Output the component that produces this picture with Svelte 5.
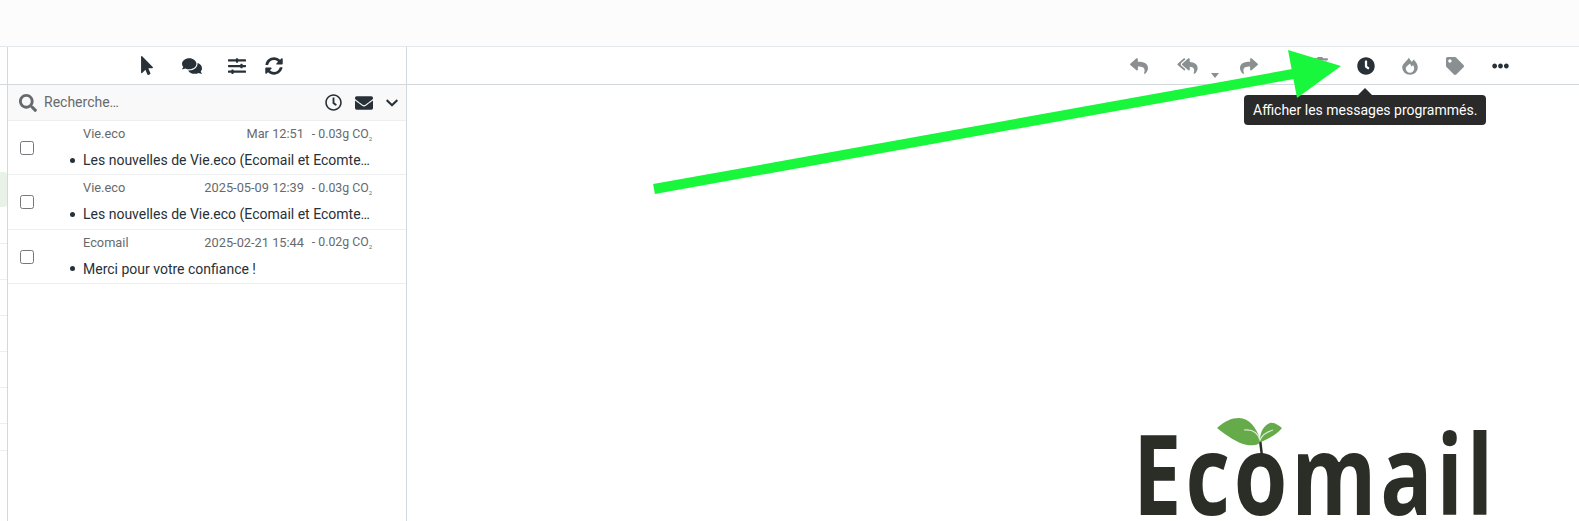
<script>
  const icons = {
    pointer: ['0 0 320 512', 'M302.189 329.126H196.105l55.831 135.993c3.889 9.428-.555 19.999-9.444 23.999l-49.165 21.427c-9.165 4-19.443-.571-23.332-9.714l-53.053-129.136-86.664 89.138C18.729 472.71 0 463.554 0 447.977V18.299C0 1.899 19.921-6.096 30.277 5.443l284.412 292.542c11.472 11.179 3.007 31.141-12.5 31.141z'],
    comments: ['0 0 576 512', 'M416 192c0-88.4-93.1-160-208-160S0 103.6 0 192c0 34.3 14.1 65.9 38 92-13.4 30.2-35.5 54.2-35.8 54.5-2.2 2.3-2.8 5.7-1.5 8.7S4.8 352 8 352c36.6 0 66.9-12.3 88.7-25 32.2 15.7 70.3 25 111.3 25 114.9 0 208-71.6 208-160zm122 220c23.9-26 38-57.7 38-92 0-66.9-53.5-124.2-129.3-148.1.9 6.6 1.3 13.3 1.3 20.1 0 105.9-107.7 192-240 192-10.8 0-21.3-.8-31.7-1.9C207.8 439.6 281.8 480 368 480c41 0 79.1-9.2 111.3-25 21.8 12.7 52.1 25 88.7 25 3.2 0 6.1-1.9 7.3-4.8 1.3-2.9.7-6.3-1.5-8.7-.3-.3-22.4-24.2-35.8-54.5z'],
    sliders: ['0 0 512 512', 'M496 384H160v-16c0-8.8-7.2-16-16-16h-32c-8.8 0-16 7.2-16 16v16H16c-8.8 0-16 7.2-16 16v32c0 8.8 7.2 16 16 16h80v16c0 8.8 7.2 16 16 16h32c8.8 0 16-7.2 16-16v-16h336c8.8 0 16-7.2 16-16v-32c0-8.8-7.2-16-16-16zm0-160h-80v-16c0-8.8-7.2-16-16-16h-32c-8.8 0-16 7.2-16 16v16H16c-8.8 0-16 7.2-16 16v32c0 8.8 7.2 16 16 16h336v16c0 8.8 7.2 16 16 16h32c8.8 0 16-7.2 16-16v-16h80c8.8 0 16-7.2 16-16v-32c0-8.8-7.2-16-16-16zm0-160H288V48c0-8.8-7.2-16-16-16h-32c-8.8 0-16 7.2-16 16v16H16C7.2 64 0 71.2 0 80v32c0 8.8 7.2 16 16 16h208v16c0 8.8 7.2 16 16 16h32c8.8 0 16-7.2 16-16v-16h208c8.8 0 16-7.2 16-16V80c0-8.8-7.2-16-16-16z'],
    sync: ['0 0 512 512', 'M370.72 133.28C339.458 104.008 298.888 87.962 255.848 88c-77.458.068-144.328 53.178-162.791 126.85-1.344 5.363-6.122 9.15-11.651 9.15H24.103c-7.498 0-13.194-6.807-11.807-14.176C33.933 94.924 134.813 8 256 8c66.448 0 126.791 26.136 171.315 68.685L463.03 40.97C478.149 25.851 504 36.559 504 57.941V192c0 13.255-10.745 24-24 24H345.941c-21.382 0-32.09-25.851-16.971-40.971l41.75-41.749zM32 296h134.059c21.382 0 32.09 25.851 16.971 40.971l-41.75 41.75c31.262 29.273 71.835 45.319 114.876 45.28 77.418-.07 144.315-53.144 162.787-126.849 1.344-5.363 6.122-9.15 11.651-9.15h57.304c7.498 0 13.194 6.807 11.807 14.176C478.067 417.076 377.187 504 256 504c-66.448 0-126.791-26.136-171.315-68.685L48.97 471.03C33.851 486.149 8 475.441 8 454.059V320c0-13.255 10.745-24 24-24z'],
    search: ['0 0 512 512', 'M505 442.7L405.3 343c-4.5-4.5-10.6-7-17-7H372c27.6-35.3 44-79.7 44-128C416 93.1 322.9 0 208 0S0 93.1 0 208s93.1 208 208 208c48.3 0 92.7-16.4 128-44v16.3c0 6.4 2.5 12.5 7 17l99.7 99.7c9.4 9.4 24.6 9.4 33.9 0l28.3-28.3c9.4-9.4 9.4-24.6.1-34zM208 336c-70.7 0-128-57.2-128-128 0-70.7 57.2-128 128-128 70.7 0 128 57.2 128 128 0 70.7-57.2 128-128 128z'],
    clockLine: ['0 0 512 512', 'M256 8C119 8 8 119 8 256s111 248 248 248 248-111 248-248S393 8 256 8zm0 448c-110.5 0-200-89.5-200-200S145.5 56 256 56s200 89.5 200 200-89.5 200-200 200zm61.8-104.4l-84.9-61.7c-3.1-2.3-4.9-5.9-4.9-9.7V116c0-6.6 5.4-12 12-12h32c6.6 0 12 5.4 12 12v141.7l66.8 48.6c5.4 3.9 6.5 11.4 2.6 16.8L334.6 349c-3.9 5.3-11.4 6.5-16.8 2.6z'],
    envelope: ['0 0 512 512', 'M502.3 190.8c3.9-3.1 9.7-.2 9.7 4.7V400c0 26.5-21.5 48-48 48H48c-26.5 0-48-21.5-48-48V195.6c0-5 5.7-7.8 9.7-4.7 22.4 17.4 52.1 39.5 154.1 113.6 21.1 15.4 56.7 47.8 92.2 47.6 35.7.3 72-32.8 92.3-47.6 102-74.1 131.6-96.3 154-113.7zM256 320c23.2.4 56.6-29.2 73.4-41.4 132.7-96.3 142.8-104.7 173.4-128.7 5.8-4.5 9.2-11.5 9.2-18.9v-19c0-26.5-21.5-48-48-48H48C21.5 64 0 85.5 0 112v19c0 7.4 3.4 14.3 9.2 18.9 30.6 23.9 40.7 32.4 173.4 128.7 16.8 12.2 50.2 41.8 73.4 41.4z'],
    chevron: ['0 0 448 512', 'M207.029 381.476L12.686 187.132c-9.373-9.373-9.373-24.569 0-33.941l22.667-22.667c9.357-9.357 24.522-9.375 33.901-.04L224 284.505l154.745-154.021c9.379-9.335 24.544-9.317 33.901.04l22.667 22.667c9.373 9.373 9.373 24.569 0 33.941L240.971 381.476c-9.373 9.372-24.569 9.372-33.942 0z'],
    reply: ['0 0 512 512', 'M8.309 189.836L184.313 37.851C199.719 24.546 224 35.347 224 56.015v80.053c160.629 1.839 288 34.032 288 186.258 0 61.441-39.581 122.309-83.333 154.132-13.653 9.931-33.111-2.533-28.077-18.631 45.344-145.012-21.507-183.51-176.59-185.742V360c0 20.7-24.3 31.453-39.687 18.164l-176.004-152c-11.071-9.562-11.086-26.753 0-36.328z'],
    replyAll: ['0 0 576 512', 'M136.309 189.836L312.313 37.851C327.72 24.546 352 35.348 352 56.015v82.763c129.182 10.231 224 52.212 224 183.548 0 61.441-39.582 122.309-83.333 154.132-13.653 9.931-33.111-2.533-28.077-18.631 38.512-123.162-3.922-169.482-112.59-182.015v84.175c0 20.701-24.3 31.453-39.687 18.164L136.309 226.164c-11.071-9.561-11.086-26.753 0-36.328zm-128 36.328L184.313 378.15C199.7 391.439 224 380.687 224 359.986v-15.818l-108.606-93.785A55.96 55.96 0 0 1 96 207.998a55.953 55.953 0 0 1 19.393-42.38L224 71.832V56.015c0-20.667-24.28-31.469-39.687-18.164L8.309 189.836c-11.086 9.575-11.071 26.767 0 36.328z'],
    share: ['0 0 512 512', 'M503.691 189.836L327.687 37.851C312.281 24.546 288 35.347 288 56.015v80.053C127.371 137.907 0 170.1 0 322.326c0 61.441 39.581 122.309 83.333 154.132 13.653 9.931 33.111-2.533 28.077-18.631C66.066 312.814 132.917 274.316 288 272.085V360c0 20.7 24.3 31.453 39.687 18.164l176.004-152c11.071-9.562 11.086-26.753 0-36.328z'],
    trash: ['0 0 448 512', 'M432 32H312l-9.4-18.7A24 24 0 0 0 281.1 0H166.8a23.72 23.72 0 0 0-21.4 13.3L136 32H16A16 16 0 0 0 0 48v32a16 16 0 0 0 16 16h416a16 16 0 0 0 16-16V48a16 16 0 0 0-16-16zM53.2 467a48 48 0 0 0 47.9 45h245.8a48 48 0 0 0 47.9-45L416 128H32z'],
    clock: ['0 0 512 512', 'M256,8C119,8,8,119,8,256S119,504,256,504,504,393,504,256,393,8,256,8Zm92.49,313h0l-20,25a16,16,0,0,1-22.49,2.5h0l-67-49.72a40,40,0,0,1-15-31.23V112a16,16,0,0,1,16-16h32a16,16,0,0,1,16,16V256l58,42.5A16,16,0,0,1,348.49,321Z'],
    fire: ['0 0 16 18', 'M7 .5C7.5 2.500 9 3.800 10 5c.5-.8 1-1.500 1.500-2.500 2.500 2 4.300 5 4.300 8A7.800 7.300 0 0 1 .2 10.500C.2 7 4.500 4.500 7 .5zM8 6.500C7 8 3.800 9 3.800 11.500a4.200 4.200 0 0 0 8.400 0c0-1.500-.7-3-1.200-3.500-.5.7-1 1.200-1.500 1.500C9 8.500 8.300 7.500 8 6.500z'],
    tag: ['0 0 512 512', 'M0 252.118V48C0 21.49 21.49 0 48 0h204.118a48 48 0 0 1 33.941 14.059l211.882 211.882c18.745 18.745 18.745 49.137 0 67.882L293.823 497.941c-18.745 18.745-49.137 18.745-67.882 0L14.059 286.059A48 48 0 0 1 0 252.118zM112 64c-26.51 0-48 21.49-48 48s21.49 48 48 48 48-21.49 48-48-21.49-48-48-48z'],
    ellipsis: ['0 0 512 512', 'M328 256c0 39.8-32.2 72-72 72s-72-32.2-72-72 32.2-72 72-72 72 32.2 72 72zm104-72c-39.800 0-72 32.200-72 72s32.200 72 72 72 72-32.200 72-72-32.200-72-72-72zm-352 0c-39.800 0-72 32.200-72 72s32.200 72 72 72 72-32.200 72-72-32.200-72-72-72z']
  };

  const listTools = [
    { icon: 'pointer', w: 12, h: 19, gap: 29 },
    { icon: 'comments', w: 20, h: 18, gap: 26 },
    { icon: 'sliders', w: 18, h: 18, gap: 19 },
    { icon: 'sync', w: 18, h: 18, gap: 0 }
  ];

  const readTools = [
    { icon: 'reply', w: 18, gap: 29, color: '#8a8f92' },
    { icon: 'replyAll', w: 21, gap: 42, color: '#8a8f92', caret: true },
    { icon: 'share', w: 18, gap: 54, color: '#8a8f92' },
    { icon: 'trash', w: 16, gap: 29, color: '#8a8f92' },
    { icon: 'clock', w: 18, gap: 27, color: '#283138' },
    { icon: 'fire', w: 16, gap: 28, color: '#8a8f92' },
    { icon: 'tag', w: 18, gap: 28, color: '#8a8f92' },
    { icon: 'ellipsis', w: 17, gap: 0, color: '#283138' }
  ];

  const messages = [
    { from: 'Vie.eco', date: 'Mar 12:51', co2: '- 0.03g', subject: 'Les nouvelles de Vie.eco (Ecomail et Ecomte…' },
    { from: 'Vie.eco', date: '2025-05-09 12:39', co2: '- 0.03g', subject: 'Les nouvelles de Vie.eco (Ecomail et Ecomte…' },
    { from: 'Ecomail', date: '2025-02-21 15:44', co2: '- 0.02g', subject: 'Merci pour votre confiance !' }
  ];

  const folderHeights = [36, 36, 36, 36, 36, 27, 45];
</script>

{#snippet icon(name, w, h, color)}
  <svg class="icon" viewBox={icons[name][0]} width={w} height={h} fill={color}>
    <path fill-rule="evenodd" d={icons[name][1]} />
  </svg>
{/snippet}

<div class="page">
  <div class="topbar"></div>

  <div class="main">
    <aside class="folders">
      <div class="folders-head"></div>
      <div class="active-folder"></div>
      {#each folderHeights as h}
        <div class="folder" style="height: {h}px"></div>
      {/each}
    </aside>

    <section class="list">
      <div class="list-tools">
        {#each listTools as t}
          <span class="tool" style="margin-right: {t.gap}px">
            {@render icon(t.icon, t.w, t.h, '#283138')}
          </span>
        {/each}
      </div>

      <div class="search">
        {@render icon('search', 18, 18, '#666a6d')}
        <span class="placeholder">Recherche…</span>
        <span class="search-actions">
          {@render icon('clockLine', 17, 17, '#283138')}
          {@render icon('envelope', 18, 18, '#283138')}
          {@render icon('chevron', 12, 14, '#283138')}
        </span>
      </div>

      {#each messages as m}
        <div class="row">
          <span class="check"><input type="checkbox" /></span>
          <div class="body">
            <div class="meta">
              <span class="from">{m.from}</span>
              <span class="date">{m.date}</span>
              <span class="co2">{m.co2} CO<sub>2</sub></span>
            </div>
            <div class="subject-line">
              <span class="dot"></span>
              <span class="subject">{m.subject}</span>
            </div>
          </div>
        </div>
      {/each}
    </section>

    <section class="reader">
      <div class="read-tools">
        {#each readTools as t}
          <span class="tool" style="margin-right: {t.gap}px">
            {@render icon(t.icon, t.w, 18, t.color)}
            {#if t.caret}<span class="caret"></span>{/if}
          </span>
        {/each}
      </div>

      <div class="logo">
        <span class="wordmark">Ecomail</span>
        <svg class="sprout" viewBox="0 0 66 38" width="66" height="38">
          <path d="M43 22 C44 28 44 32 45 37" stroke="#2a2e27" stroke-width="2.5" fill="none" />
          <path d="M0 10 C8 3 14 0 22 0 C32 0 40 10 43 22 C44 27 36 28 30 27 C20 25 10 18 0 10 Z" fill="#66ab4a" />
          <path d="M43 22 C43 14 47 7 53 5 C58 4 62 8 65 10 C60 16 52 21 43 24 Z" fill="#66ab4a" />
          <path d="M27 12 C36 11 41 15 43 22 C45 17 49 14 56 12" stroke="#dcebd3" stroke-width="1.2" fill="none" />
        </svg>
      </div>

      <div class="tooltip">Afficher les messages programmés.</div>
    </section>
  </div>

  <svg class="arrow" viewBox="0 0 1579 521" width="1579" height="521">
    <path d="M654 189 L1296 73.500" stroke="#19f73c" stroke-width="10" fill="none" />
    <path d="M1288 50 L1341 66 L1297 98 Z" fill="#19f73c" />
  </svg>
</div>

<style>
  :global(body) {
    margin: 0;
    background: #fff;
  }

  .page {
    position: relative;
    width: 1579px;
    height: 521px;
    overflow: hidden;
    font-family: Roboto, "Liberation Sans", sans-serif;
    color: #283138;
  }

  .topbar {
    height: 46px;
    background: #fcfcfd;
    border-bottom: 1px solid #e6e9eb;
  }

  .main {
    display: flex;
    height: 474px;
  }

  .folders {
    width: 7px;
    border-right: 1px solid #d3d8dc;
    flex-shrink: 0;
  }

  .folders-head {
    height: 37px;
    border-bottom: 1px solid #d3d8dc;
  }

  .active-folder {
    margin-top: 87px;
    height: 35px;
    background: #e9f2e6;
    border-radius: 0 3px 3px 0;
    margin-bottom: 36px;
  }

  .folder {
    box-sizing: border-box;
    border-top: 1px solid #eceeef;
  }

  .list {
    width: 398px;
    border-right: 1px solid #d3d8dc;
    flex-shrink: 0;
  }

  .list-tools {
    height: 37px;
    display: flex;
    align-items: center;
    padding-left: 133px;
    border-bottom: 1px solid #d3d8dc;
  }

  .tool {
    position: relative;
    display: flex;
  }

  .icon {
    display: block;
    flex-shrink: 0;
  }

  .search {
    height: 35px;
    display: flex;
    align-items: center;
    padding: 0 8px 0 11px;
    background: #f9f9f9;
    border-bottom: 1px solid #eceeef;
    color: #666a6d;
    font-size: 14px;
  }

  .placeholder {
    margin: 0 0 2px 7px;
  }

  .search-actions {
    margin-left: auto;
    display: flex;
    align-items: center;
    gap: 13px;
  }

  .row {
    box-sizing: border-box;
    height: 54.33px;
    display: flex;
    border-bottom: 1px solid #eceeef;
  }

  .check {
    width: 62px;
    flex-shrink: 0;
    padding-left: 12px;
    box-sizing: border-box;
  }

  .check input {
    appearance: none;
    display: block;
    box-sizing: border-box;
    width: 14px;
    height: 14px;
    margin: 20px 0 0;
    background: #fff;
    border: 1px solid #77767b;
    border-radius: 2.5px;
  }

  .body {
    width: 301px;
  }

  .meta {
    height: 25px;
    display: flex;
    align-items: center;
    margin: 0 -1px 0 13px;
    font-size: 12.8px;
    color: #666a6d;
  }

  .date {
    margin: 0 2px 0 auto;
  }

  .co2 {
    width: 66px;
    text-align: right;
    white-space: nowrap;
    font-size: 12.3px;
  }

  .co2 sub {
    font-size: 6px;
    line-height: 0;
  }

  .subject-line {
    display: flex;
    align-items: center;
    height: 26px;
    margin-top: 1px;
  }

  .dot {
    width: 5px;
    height: 5px;
    border-radius: 50%;
    background: #283138;
    margin-right: 8px;
    flex-shrink: 0;
  }

  .subject {
    font-size: 14px;
    white-space: nowrap;
  }

  .reader {
    position: relative;
    flex: 1;
  }

  .read-tools {
    height: 37px;
    display: flex;
    align-items: center;
    justify-content: flex-end;
    padding-right: 70px;
    border-bottom: 1px solid #d3d8dc;
  }

  .caret {
    position: absolute;
    left: 34px;
    top: 16px;
    width: 0;
    height: 0;
    border: 4px solid transparent;
    border-top: 5px solid #8a8f92;
    border-bottom: 0;
  }

  .logo {
    position: relative;
    width: 440px;
    margin: 337px 0 0 726px;
  }

  .wordmark {
    display: block;
    width: fit-content;
    font-family: "Open Sans", sans-serif;
    font-weight: 700;
    font-size: 111px;
    line-height: 100px;
    letter-spacing: 5px;
    color: #2a2e27;
    white-space: nowrap;
    transform: scaleX(0.78);
    transform-origin: left center;
  }

  .sprout {
    position: absolute;
    left: 84px;
    top: -4px;
    overflow: visible;
  }

  .tooltip {
    position: absolute;
    left: 837px;
    top: 48px;
    height: 30px;
    line-height: 30px;
    padding: 0 9px;
    background: #2a2a2a;
    color: #fff;
    font-size: 14px;
    border-radius: 4px;
    white-space: nowrap;
  }

  .tooltip::before {
    content: "";
    position: absolute;
    left: 114px;
    top: -7px;
    border: 7px solid transparent;
    border-top: 0;
    border-bottom-color: #2a2a2a;
  }

  .arrow {
    position: absolute;
    left: 0;
    top: 0;
    pointer-events: none;
  }
</style>
